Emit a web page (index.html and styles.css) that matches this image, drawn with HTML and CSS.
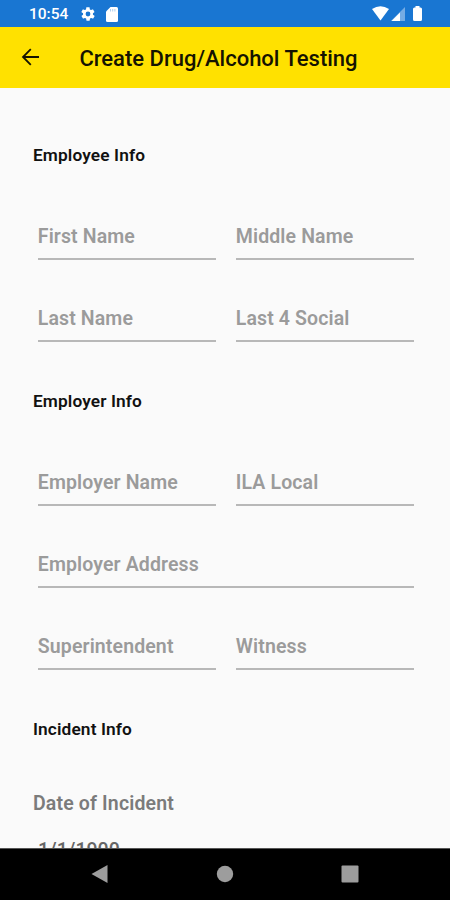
FILE: index.html
```html
<!DOCTYPE html>
<html lang="en">
<head>
<meta charset="utf-8">
<title>Create Drug/Alcohol Testing</title>
<link rel="stylesheet" href="styles.css">
</head>
<body>
<header class="status">
  <span class="clock">10:54</span>
  <svg class="gear" width="16" height="16" viewBox="0 0 24 24"><path fill="#fff" fill-rule="evenodd" d="M19.4 13a7.8 7.8 0 0 0 0-2l2.1-1.6c.2-.2.3-.4.1-.7l-2-3.4c-.1-.3-.4-.3-.6-.2l-2.5 1a7.300 7.300 0 0 0-1.700-1l-.4-2.600c0-.3-.2-.5-.5-.5h-4c-.3 0-.5.2-.5.5l-.4 2.600a8 8 0 0 0-1.700 1l-2.500-1c-.2-.1-.5 0-.6.2l-2 3.400c-.1.300-.1.500.1.700L4.600 11a8 8 0 0 0 0 2l-2.100 1.600c-.2.200-.3.400-.1.700l2 3.400c.1.300.4.300.6.200l2.500-1c.5.400 1.100.700 1.700 1l.4 2.600c0 .3.2.5.5.5h4c.3 0 .5-.2.5-.5l.4-2.600a7 7 0 0 0 1.700-1l2.500 1c.2.100.5 0 .6-.2l2-3.400c.1-.300.1-.500-.1-.700zM12 15.600a3.600 3.600 0 1 1 0-7.200 3.600 3.600 0 0 1 0 7.200z"/></svg>
  <svg class="card" width="12" height="15" viewBox="0 0 12 15"><path fill="#fff" d="M4.500 0h6Q12 0 12 1.500v12Q12 15 10.500 15h-9Q0 15 0 13.500v-9z"/><path stroke="#1976d2" stroke-opacity=".35" d="M4.500 2v2.500M6.700 2v2.500M8.900 2v2.500"/></svg>
  <svg class="signals" width="51" height="16" viewBox="0 0 51 16"><path fill="#fff" d="M0 3Q8.500-2.500 17 3L8.500 14.500z"/><path fill="#fff" opacity=".4" d="M33 1v14H19z"/><path fill="#fff" d="M28 6.500V15h-8.500z"/><path fill="#fff" d="M43.500 1.500V0h4v1.500h1q1.500 0 1.500 1.500v10.500q0 1.500-1.500 1.500h-6Q41 15 41 13.500V3q0-1.500 1.500-1.500z"/></svg>
</header>
<div class="appbar">
  <svg class="back" width="18" height="18" viewBox="0 0 18 18" fill="none" stroke="#151300" stroke-width="1.800"><path d="M18 9H2M9.800 1.200 2 9l7.800 7.800"/></svg>
  <h1>Create Drug/Alcohol Testing</h1>
</div>
<main class="form">
  <h2 class="first">Employee Info</h2>
  <div class="row"><div class="field">First Name</div><div class="field">Middle Name</div></div>
  <div class="row"><div class="field">Last Name</div><div class="field">Last 4 Social</div></div>
  <h2>Employer Info</h2>
  <div class="row"><div class="field">Employer Name</div><div class="field">ILA Local</div></div>
  <div class="row"><div class="field wide">Employer Address</div></div>
  <div class="row"><div class="field">Superintendent</div><div class="field">Witness</div></div>
  <h2>Incident Info</h2>
  <div class="label">Date of Incident</div>
  <div class="date">1/1/1900</div>
</main>
<nav class="navbar">
  <svg width="18" height="18" viewBox="0 0 18 18"><path fill="#9d9d9d" d="M16.500 0v18L.5 9z"/></svg>
  <svg width="18" height="18" viewBox="0 0 18 18"><circle cx="9" cy="9" r="8.200" fill="#9d9d9d"/></svg>
  <svg width="18" height="18" viewBox="0 0 18 18"><rect x=".5" y=".5" width="17" height="17" rx="1" fill="#9d9d9d"/></svg>
</nav>
</body>
</html>
```
FILE: styles.css
```css
* { box-sizing: border-box; }
body {
  margin: 0;
  width: 450px;
  height: 900px;
  overflow: hidden;
  display: flex;
  flex-direction: column;
  background: #fafafa;
  font-family: Roboto, sans-serif;
}
.status {
  flex: none;
  height: 26.5px;
  padding: 2px 27px 0 29px;
  display: flex;
  align-items: center;
  background: #1976d2;
  color: #fff;
}
.clock { width: 51px; font-size: 15.5px; font-weight: 500; line-height: 20px; }
.card { margin-left: 10px; }
.signals { margin-left: auto; }
.appbar {
  flex: none;
  height: 61.5px;
  padding-left: 21px;
  display: flex;
  align-items: center;
  background: #ffe100;
}
h1 {
  margin: 3px 0 0 40.4px;
  font-size: 22px;
  font-weight: 500;
  line-height: 30px;
  color: #151300;
  white-space: nowrap;
}
.form { flex: 1; min-height: 0; overflow: hidden; padding: 0 33px; }
h2 {
  height: 82px;
  margin: 0;
  padding-top: 49px;
  font-size: 17.3px;
  line-height: 20px;
  font-weight: 600;
  letter-spacing: 0.12px;
  color: #111;
}
h2.first { height: 90px; padding-top: 57px; }
.row {
  height: 82px;
  padding: 0 3.5px 0 4.5px;
  display: grid;
  grid-template-columns: 178px 178px;
  column-gap: 20px;
}
.field {
  padding: 47px 0 0 0.3px;
  border-bottom: 2px solid #b8b8b8;
  font-size: 19.5px;
  line-height: 24px;
  font-weight: 600;
  letter-spacing: 0.12px;
  color: #9b9b9b;
}
.wide { grid-column: 1 / -1; }
.label {
  padding-top: 40px;
  font-size: 19.5px;
  line-height: 24px;
  font-weight: 600;
  letter-spacing: 0.15px;
  color: #7b7b7b;
}
.date {
  padding: 23px 0 0 5px;
  font-size: 19.5px;
  line-height: 24px;
  font-weight: 500;
  color: #666;
}
.navbar {
  flex: none;
  height: 52px;
  padding: 0 91px 1px;
  display: flex;
  align-items: center;
  justify-content: space-between;
  background: #000;
  border-top: 1px solid #555;
}
```
